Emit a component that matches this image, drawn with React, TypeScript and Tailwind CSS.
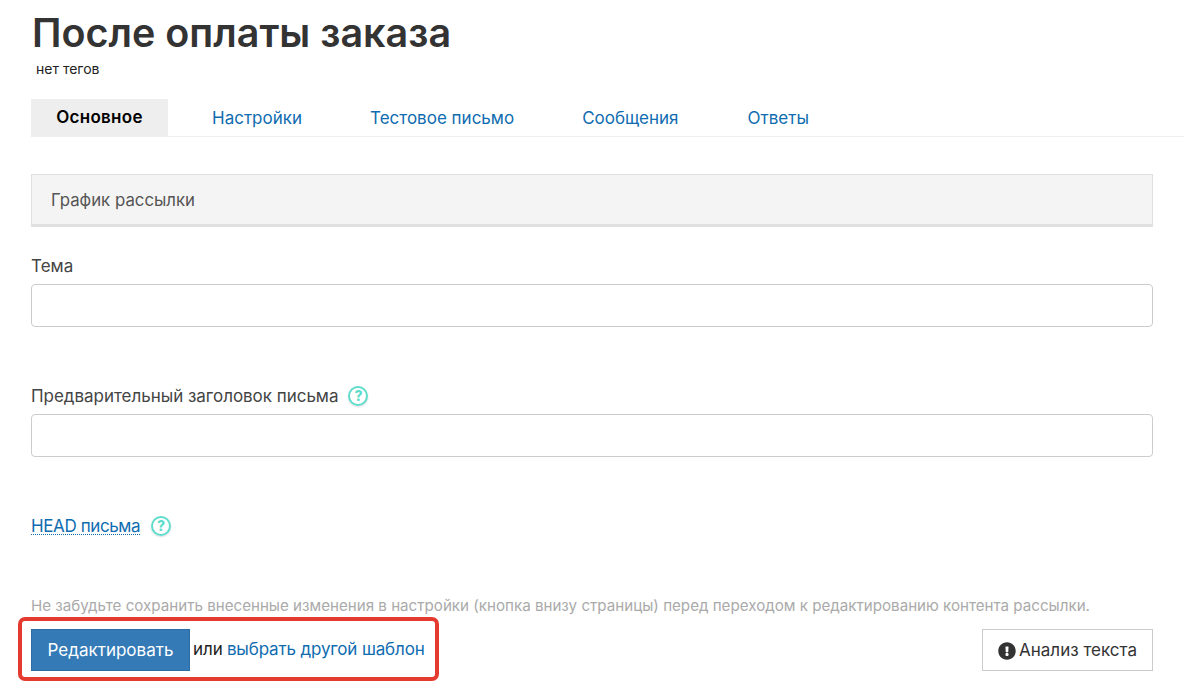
import React from "react";

function Help() {
  return (
    <span className="inline-flex w-[20px] h-[20px] rounded-full border-2 border-[#5fdccb] text-[#5fdccb] items-center justify-center text-[14px] font-extrabold leading-none shadow-[0_1px_2px_rgba(0,0,0,0.15)]">
      ?
    </span>
  );
}

export default function App() {
  return (
    <div className="w-[1184px] h-[683px] overflow-hidden bg-white relative font-['Inter','Liberation_Sans',sans-serif] text-[#333]">
      <div className="pl-[32px] pt-[8px]">
        <h1 className="text-[39.5px] leading-[50px] font-semibold text-[#333]">После оплаты заказа</h1>
        <div className="text-[14px] leading-[16px] ml-[4px] mt-[3px] text-[#222]">нет тегов</div>
      </div>

      <div className="ml-[31px] mt-[22px] flex h-[38px] border-b border-[#eee] text-[17px]">
        <div className="w-[137px] h-[38px] bg-[#eee] flex items-center justify-center font-semibold tracking-[0.3px] text-black">Основное</div>
        <a className="ml-[44px] leading-[38px] text-[#0f6cb0]">Настройки</a>
        <a className="ml-[68px] leading-[38px] text-[#0f6cb0]">Тестовое письмо</a>
        <a className="ml-[68px] leading-[38px] text-[#0f6cb0]">Сообщения</a>
        <a className="ml-[69px] leading-[38px] text-[#0f6cb0]">Ответы</a>
      </div>

      <div className="mx-[31px] mt-[37px] h-[53px] bg-[#f4f4f4] border border-[#e0e0e0] border-b-[3px] flex items-center pl-[19px] pt-[2px] text-[16.8px] text-[#555]">
        График рассылки
      </div>

      <div className="ml-[31px] mt-[27px] text-[17px] leading-[24px] text-[#444]">Тема</div>
      <div className="mx-[31px] mt-[6px] h-[43px] border border-[#ccc] rounded-[4px] bg-white"></div>

      <div className="ml-[31px] mt-[57px] flex items-center gap-[10px] text-[17px] leading-[24px] text-[#444]">
        <span className="tracking-[-0.03px]">Предварительный заголовок письма</span>
        <Help />
      </div>
      <div className="mx-[31px] mt-[6px] h-[43px] border border-[#ccc] rounded-[4px] bg-white"></div>

      <div className="ml-[31px] mt-[59px] flex items-center gap-[11px] text-[17px] leading-[24px]">
        <a className="text-[#0f6cb0] border-b border-dotted border-[#0f6cb0] leading-[16px] tracking-[-0.4px]">HEAD письма</a>
        <Help />
      </div>

      <div className="ml-[31px] mt-[60px] text-[15.15px] leading-[20px] text-[#aaa] whitespace-nowrap">
        Не забудьте сохранить внесенные изменения в настройки (кнопка внизу страницы) перед переходом к редактированию контента рассылки.
      </div>

      <div className="mx-[31px] mt-[13px] flex items-center justify-between">
        <div className="flex items-center text-[17px]">
          <button className="w-[159px] h-[42px] pt-[2px] bg-[#337ab7] border border-[#2e6da4] text-white text-[17px]">Редактировать</button>
          <span className="ml-[3px] text-[#222]">или</span>
          <a className="ml-[4px] text-[#0f6cb0] tracking-[-0.15px]">выбрать другой шаблон</a>
        </div>
        <button className="w-[171px] h-[42px] pt-[2px] border border-[#ccc] bg-white text-[17px] text-[#333] flex items-center justify-center gap-[3px]">
          <svg width="18" height="18" viewBox="0 0 512 512" fill="#333">
            <path d="M504 256c0 137-111 248-248 248S8 393 8 256 119 8 256 8s248 111 248 248zm-248 50c-25.4 0-46 20.6-46 46s20.6 46 46 46 46-20.6 46-46-20.6-46-46-46zm-43.7-165.3l7.4 136c.3 6.4 5.6 11.3 12 11.3h48.5c6.4 0 11.6-5 12-11.3l7.4-136c.4-6.9-5.1-12.7-12-12.7h-63.4c-6.9 0-12.4 5.8-12 12.7z" />
          </svg>
          Анализ текста
        </button>
      </div>

      <div className="absolute left-[18px] top-[617px] w-[421px] h-[64px] border-[4px] border-[#e53a30] rounded-[7px] pointer-events-none"></div>
    </div>
  );
}
